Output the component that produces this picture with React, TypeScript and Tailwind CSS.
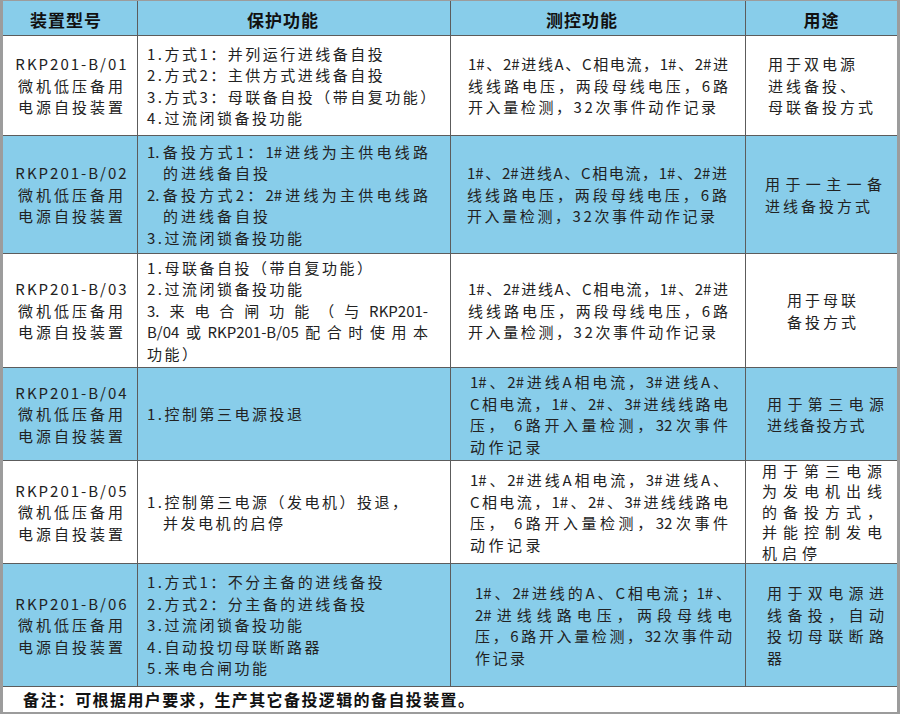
import type { ReactNode } from "react";

/**
 * 备自投装置选型表
 * Four-column spec table: 型号 / 保护功能 / 测控功能 / 用途
 */

const COLS = "grid grid-cols-[135px_313px_295px_151px]";

// One text line, kept on a single row like the printed table
function L({ children, className = "" }: { children: ReactNode; className?: string }) {
  return <div className={`whitespace-nowrap ${className}`}>{children}</div>;
}

// Justified line: characters spread over the given width
function J({ children, className = "" }: { children: ReactNode; className?: string }) {
  return (
    <div className={`text-justify [text-align-last:justify] ${className}`}>
      {children}
    </div>
  );
}

function Cell({
  children,
  className = "",
  last = false,
}: {
  children?: ReactNode;
  className?: string;
  last?: boolean;
}) {
  return (
    <div
      className={`flex flex-col overflow-hidden ${
        last ? "" : "border-r border-[#5c5c5c]"
      } ${className.includes("justify-start") ? "" : "justify-center"} ${className}`}
    >
      {children}
    </div>
  );
}

function Model({ code }: { code: string }) {
  return (
    <Cell className="items-center text-center pl-[4px] tracking-[3px]">
      <L className="tracking-[2px]">{code}</L>
      <L>微机低压备用</L>
      <L>电源自投装置</L>
    </Cell>
  );
}

export default function App() {
  return (
    <div className="w-[900px] h-[714px] bg-white border-l-[3px] border-r-[3px] border-t border-b-2 border-[#9c9c9c] font-['Noto_Sans_CJK_SC','Noto_Sans',sans-serif] text-[15px] leading-[21.5px] text-[#222]">
      {/* Header */}
      <div className={`${COLS} h-[35px] bg-[#88cdea] border-b border-[#5c5c5c] text-[17px] font-bold tracking-[1px] text-[#111]`}>
        <Cell className="items-center pt-[4px] pr-[8px]">装置型号</Cell>
        <Cell className="items-center pt-[4px] pr-[22px]">保护功能</Cell>
        <Cell className="items-center pt-[4px] pr-[32px]">测控功能</Cell>
        <Cell last className="items-center pt-[4px]">用途</Cell>
      </div>

      {/* RKP201-B/01 */}
      <div className={`${COLS} h-[100px] bg-white border-b border-[#5c5c5c]`}>
        <Model code="RKP201-B/01" />
        <Cell className="pl-[9px] tracking-[2.5px]">
          <L>1.方式1：并列运行进线备自投</L>
          <L>2.方式2：主供方式进线备自投</L>
          <L>3.方式3：母联备自投（带自复功能）</L>
          <L>4.过流闭锁备投功能</L>
        </Cell>
        <Cell className="pl-[17px]">
          <J className="w-[260px]">1#、2#进线A、C相电流，1#、2#进</J>
          <J className="w-[260px]">线线路电压，两段母线电压，6路</J>
          <L className="tracking-[2.6px]">开入量检测，32次事件动作记录</L>
        </Cell>
        <Cell last className="pl-[22px] tracking-[3px]">
          <L>用于双电源</L>
          <L>进线备投、</L>
          <L>母联备投方式</L>
        </Cell>
      </div>

      {/* RKP201-B/02 */}
      <div className={`${COLS} h-[118px] bg-[#88cdea] border-b border-[#5c5c5c]`}>
        <Model code="RKP201-B/02" />
        <Cell className="pl-[9px] tracking-[2.5px]">
          <J className="w-[281px] tracking-normal">1.备投方式1：1#进线为主供电线路</J>
          <L className="pl-[16px] tracking-[3px]">的进线备自投</L>
          <J className="w-[281px] tracking-normal">2.备投方式2：2#进线为主供电线路</J>
          <L className="pl-[16px] tracking-[3px]">的进线备自投</L>
          <L>3.过流闭锁备投功能</L>
        </Cell>
        <Cell className="pl-[16px]">
          <J className="w-[260px]">1#、2#进线A、C相电流，1#、2#进</J>
          <J className="w-[260px]">线线路电压，两段母线电压，6路</J>
          <L className="tracking-[2.6px]">开入量检测，32次事件动作记录</L>
        </Cell>
        <Cell last className="pl-[19px]">
          <J className="w-[117px]">用于一主一备</J>
          <L className="tracking-[3px]">进线备投方式</L>
        </Cell>
      </div>

      {/* RKP201-B/03 */}
      <div className={`${COLS} h-[114px] bg-white border-b border-[#5c5c5c]`}>
        <Model code="RKP201-B/03" />
        <Cell className="pl-[9px] tracking-[2.5px]">
          <L>1.母联备自投（带自复功能）</L>
          <L>2.过流闭锁备投功能</L>
          <J className="w-[281px] tracking-normal">3.来电合闸功能（与RKP201-</J>
          <J className="w-[281px] tracking-normal">B/04或RKP201-B/05配合时使用本</J>
          <L>功能）</L>
        </Cell>
        <Cell className="pl-[17px]">
          <J className="w-[260px]">1#、2#进线A、C相电流，1#、2#进</J>
          <J className="w-[260px]">线线路电压，两段母线电压，6路</J>
          <L className="tracking-[2.6px]">开入量检测，32次事件动作记录</L>
        </Cell>
        <Cell last className="items-center pl-[3px] tracking-[3px]">
          <L>用于母联</L>
          <L>备投方式</L>
        </Cell>
      </div>

      {/* RKP201-B/04 */}
      <div className={`${COLS} h-[93px] bg-[#88cdea] border-b border-[#5c5c5c]`}>
        <Model code="RKP201-B/04" />
        <Cell className="pl-[9px] tracking-[2.5px]">
          <L>1.控制第三电源投退</L>
        </Cell>
        <Cell className="pl-[19px]">
          <J className="w-[258px]">1#、2#进线A相电流，3#进线A、</J>
          <J className="w-[258px]">C相电流，1#、2#、3#进线线路电</J>
          <J className="w-[258px]">压， 6路开入量检测，32次事件</J>
          <L className="tracking-[3.5px]">动作记录</L>
        </Cell>
        <Cell last className="pl-[21px]">
          <J className="w-[117px]">用于第三电源</J>
          <L className="tracking-[1.5px]">进线备投方式</L>
        </Cell>
      </div>

      {/* RKP201-B/05 */}
      <div className={`${COLS} h-[103px] bg-white border-b border-[#5c5c5c]`}>
        <Model code="RKP201-B/05" />
        <Cell className="pl-[9px] tracking-[2.5px]">
          <L>1.控制第三电源（发电机）投退，</L>
          <L className="pl-[16px]">并发电机的启停</L>
        </Cell>
        <Cell className="pl-[19px]">
          <J className="w-[258px]">1#、2#进线A相电流，3#进线A、</J>
          <J className="w-[258px]">C相电流，1#、2#、3#进线线路电</J>
          <J className="w-[258px]">压， 6路开入量检测，32次事件</J>
          <L className="tracking-[3.5px]">动作记录</L>
        </Cell>
        {/* five lines packed tight: the cell is barely tall enough */}
        <Cell last className="justify-start pl-[16px] leading-[20.4px]">
          <J className="w-[120px]">用于第三电源</J>
          <J className="w-[120px]">为发电机出线</J>
          <J className="w-[120px]">的备投方式，</J>
          <J className="w-[120px]">并能控制发电</J>
          <L className="tracking-[5px]">机启停</L>
        </Cell>
      </div>

      {/* RKP201-B/06 */}
      <div className={`${COLS} h-[123px] bg-[#88cdea] border-b border-[#5c5c5c]`}>
        <Model code="RKP201-B/06" />
        <Cell className="pl-[9px] tracking-[2.5px]">
          <L>1.方式1：不分主备的进线备投</L>
          <L>2.方式2：分主备的进线备投</L>
          <L>3.过流闭锁备投功能</L>
          <L>4.自动投切母联断路器</L>
          <L>5.来电合闸功能</L>
        </Cell>
        <Cell className="pl-[24px]">
          <J className="w-[256px]">1#、2#进线的A、C相电流；1#、</J>
          <J className="w-[257px]">2#进线线路电压，两段母线电</J>
          <J className="w-[257px]">压，6路开入量检测，32次事件动</J>
          <L className="tracking-[2.5px]">作记录</L>
        </Cell>
        <Cell last className="pl-[21px]">
          <J className="w-[117px]">用于双电源进</J>
          <J className="w-[117px]">线备投，自动</J>
          <J className="w-[117px]">投切母联断路</J>
          <L>器</L>
        </Cell>
      </div>

      {/* Footer note */}
      <div className="h-[25px] flex items-center pl-[20px] text-[16px] font-bold tracking-[1.4px] text-[#111] whitespace-nowrap">
        备注：可根据用户要求，生产其它备投逻辑的备自投装置。
      </div>
    </div>
  );
}
